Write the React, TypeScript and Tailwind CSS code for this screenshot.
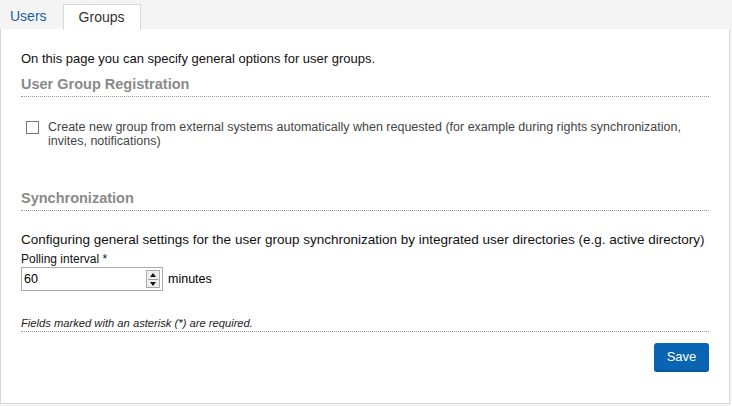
import React from "react";

export default function App() {
  return (
    <div className="w-[732px] h-[406px] bg-[#f4f4f4] overflow-hidden" style={{ fontFamily: '"Liberation Sans", Arial, sans-serif' }}>
      <div className="flex h-[29px] items-end pl-[1px]">
        <div className="h-[26px] px-[9px] flex items-center text-[14px] text-[#1c5fa6]">Users</div>
        <div className="h-[26px] ml-[7px] w-[78px] flex items-center justify-center text-[14px] text-[#333] bg-white border border-b-0 border-[#d8d8d8] relative top-[1px]">Groups</div>
      </div>
      <div className="w-[730px] h-[375px] bg-white border border-[#d8d8d8] border-t-0 pl-[20px] pr-[20px] pt-[23px] text-[13px] text-[#111]">
        <div className="leading-[14px]">On this page you can specify general options for user groups.</div>
        <div className="mt-[10px] text-[14.5px] font-bold text-[#8a8a8a] leading-[16px] pb-[4px] border-b border-dotted border-[#999]">User Group Registration</div>
        <div className="flex mt-[23px] pl-[5px]">
          <div className="w-[13px] h-[13px] border border-[#777] bg-white mt-[1px] shrink-0" />
          <div className="ml-[9px] text-[#444] leading-[14px] text-[12.5px]">
            Create new group from external systems automatically when requested (for example during rights synchronization, invites, notifications)
          </div>
        </div>
        <div className="mt-[42px] text-[14.5px] font-bold text-[#8a8a8a] leading-[16px] pb-[4px] border-b border-dotted border-[#999]">Synchronization</div>
        <div className="mt-[22px] leading-[14px] text-[13.5px] whitespace-nowrap">Configuring general settings for the user group synchronization by integrated user directories (e.g. active directory)</div>
        <div className="mt-[5px] leading-[14px] text-[12px]">Polling interval *</div>
        <div className="flex items-center mt-[1px]">
          <div className="w-[142px] h-[24px] border border-[#aaa] flex items-center justify-between pl-[2px] pr-[2px]">
            <span className="text-[12.5px] text-black">60</span>
            <div className="w-[14px] h-[18px] border border-[#aaa] bg-[#eee] flex flex-col items-center justify-center">
              <svg width="8" height="4" viewBox="0 0 8 4" className="mb-[2px]"><path d="M4 0 L7 4 L1 4 Z" fill="#111" /></svg>
              <div className="w-[10px] h-[1px] bg-[#999]" />
              <svg width="8" height="4" viewBox="0 0 8 4" className="mt-[2px]"><path d="M1 0 L7 0 L4 4 Z" fill="#111" /></svg>
            </div>
          </div>
          <span className="ml-[5px] text-[12.5px] text-black">minutes</span>
        </div>
        <div className="mt-[26px] text-[11.2px] italic text-[#222] leading-[12px] pb-[2px] border-b border-dotted border-[#999]">Fields marked with an asterisk (*) are required.</div>
        <div className="flex justify-end mt-[11px]">
          <button className="w-[55px] h-[29px] bg-[#0a64b4] border-b-[2px] border-[#07559a] rounded-[3px] text-white text-[13px]">Save</button>
        </div>
      </div>
    </div>
  );
}
